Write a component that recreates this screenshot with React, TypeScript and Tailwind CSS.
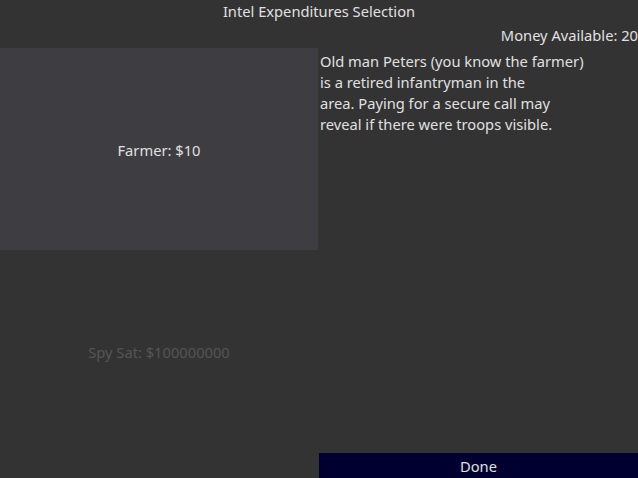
export default function App() {
  return (
    <div
      className="w-[638px] h-[478px] bg-[#333333] text-[#e0e0e0] text-[14.7px] leading-[21px] flex flex-col overflow-hidden"
      style={{ fontFamily: '"Noto Sans", "Open Sans", sans-serif' }}
    >
      <div className="h-[22px] flex items-center justify-center">Intel Expenditures Selection</div>
      <div className="h-[26px] flex items-center justify-end whitespace-nowrap">
        <span>Money Available: 20</span>
      </div>
      <div className="flex flex-1">
        <div className="w-[318px] flex flex-col">
          <div className="h-[202px] pt-[2px] bg-[#3e3d42] flex items-center justify-center">Farmer: $10</div>
          <div className="h-[202px] pt-[2px] flex items-center justify-center text-[#555555]">Spy Sat: $100000000</div>
        </div>
        <div className="flex-1 flex flex-col pl-[2px]">
          <div className="flex-1 pt-[3px] whitespace-nowrap">
            Old man Peters (you know the farmer)
            <br />
            is a retired infantryman in the
            <br />
            area. Paying for a secure call may
            <br />
            reveal if there were troops visible.
          </div>
          <div className="h-[25px] pt-[2px] ml-[-1px] bg-[#000030] flex items-center justify-center">Done</div>
        </div>
      </div>
    </div>
  );
}
